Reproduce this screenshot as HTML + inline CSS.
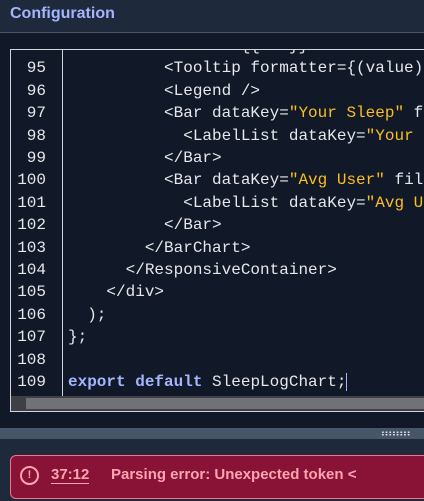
<!DOCTYPE html>
<html><head><style>
body{margin:0;width:424px;height:501px;background:#111827;overflow:hidden;font-family:"Liberation Sans",sans-serif;position:relative}
.hdr{position:absolute;left:0;top:0;width:424px;height:32px;background:#1e293b;border-bottom:1px solid #475569}
.hdr span{position:absolute;left:10px;top:5px;color:#a5b4fc;font-weight:bold;font-size:16px}
.ed{position:absolute;left:10px;top:49px;width:420px;height:361px;border:1px solid #d1d5db;background:#111827;overflow:hidden}
.gut{position:absolute;left:0;top:0;width:51px;height:346px;border-right:1px solid #d1d5db}
.code{position:absolute;left:0;top:-15px;font-family:"Liberation Mono",monospace;font-size:16px;line-height:22.4px;color:#e5e7eb;white-space:pre}
.ln{display:inline-block;width:35px;text-align:right;margin-right:22px;color:#e5e7eb}
.s{color:#fbbf24}.k{color:#a5b4fc;font-weight:bold}
.sb{position:absolute;left:0;top:346px;width:420px;height:15px;background:#3f3f46}
.sb i{position:absolute;left:15px;top:2px;right:0;height:11px;background:#71717a}
.bar{position:absolute;left:0;top:428px;width:424px;height:11px;background:#475569}
.dots{position:absolute;left:381px;top:3px;width:30px;height:5px;background-image:radial-gradient(circle,#e5e7eb 0.8px,transparent 1px);background-size:3.7px 2.5px}
.low{position:absolute;left:0;top:439px;width:424px;height:62px;background:#1e293b}
.err{position:absolute;left:10px;top:455px;width:430px;height:42px;background:#881337;border:1px solid #fb7185;border-radius:6px;color:#fda4af;font-size:15px}
.ic{position:absolute;left:9px;top:10px;width:19px;height:19px;border:2px solid #fda4af;border-radius:50%;box-sizing:border-box;text-align:center;font-size:11px;line-height:15px;font-weight:bold}
.pos{position:absolute;left:40px;top:10px;font-weight:bold;border-bottom:1px solid #fda4af;line-height:17px}
.msg{position:absolute;left:100px;top:10px;font-weight:bold;line-height:17px}
</style></head><body>
<div class="hdr"><span>Configuration</span></div>
<div class="ed"><div class="gut"></div>
<div class="code"><span class="ln">94</span>                  {{...}}
<span class="ln">95</span>          &lt;Tooltip formatter={(value) =&gt;
<span class="ln">96</span>          &lt;Legend /&gt;
<span class="ln">97</span>          &lt;Bar dataKey=<span class="s">"Your Sleep"</span> fill
<span class="ln">98</span>            &lt;LabelList dataKey=<span class="s">"Your Sl</span>
<span class="ln">99</span>          &lt;/Bar&gt;
<span class="ln">100</span>          &lt;Bar dataKey=<span class="s">"Avg User"</span> fill=
<span class="ln">101</span>            &lt;LabelList dataKey=<span class="s">"Avg Use</span>
<span class="ln">102</span>          &lt;/Bar&gt;
<span class="ln">103</span>        &lt;/BarChart&gt;
<span class="ln">104</span>      &lt;/ResponsiveContainer&gt;
<span class="ln">105</span>    &lt;/div&gt;
<span class="ln">106</span>  );
<span class="ln">107</span>};
<span class="ln">108</span>
<span class="ln">109</span><span class="k">export</span> <span class="k">default</span> SleepLogChart;<span style="border-left:1px solid #a5b4fc"> </span></div>
<div class="sb"><i></i></div></div>
<div class="bar"><div class="dots"></div></div>
<div class="low"></div>
<div class="err"><div class="ic">!</div><span class="pos">37:12</span><span class="msg">Parsing error: Unexpected token &lt;</span></div>
</body></html>
